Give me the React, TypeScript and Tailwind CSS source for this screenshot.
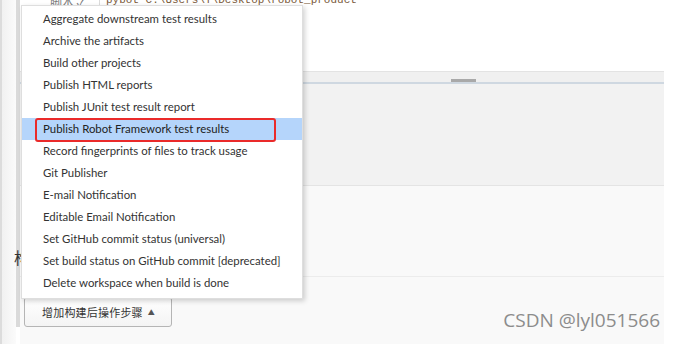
import { ReactNode } from "react";

// Jenkins "post-build action" dropdown, opened over the job config page.
const items = [
  "Aggregate downstream test results",
  "Archive the artifacts",
  "Build other projects",
  "Publish HTML reports",
  "Publish JUnit test result report",
  "Publish Robot Framework test results",
  "Record fingerprints of files to track usage",
  "Git Publisher",
  "E-mail Notification",
  "Editable Email Notification",
  "Set GitHub commit status (universal)",
  "Set build status on GitHub commit [deprecated]",
  "Delete workspace when build is done",
];

const SELECTED = 5;

function MenuItem({ label, active }: { label: string; active: boolean }): ReactNode {
  return (
    <li
      className={
        active
          ? "relative h-[22px] flex items-center pl-[21px] whitespace-nowrap bg-[#b5d5fb] text-[#222]"
          : "relative h-[22px] flex items-center pl-[21px] whitespace-nowrap text-[#333]"
      }
    >
      {label}
      {active && (
        <span className="absolute left-[13px] right-[26px] top-0 h-[24px] rounded-[3px] border-2 border-[#ea2a2a]" />
      )}
    </li>
  );
}

export default function App() {
  return (
    <div className="relative w-[676px] h-[344px] bg-white overflow-hidden flex font-['Lato',sans-serif]">
      <div className="w-[664px] h-full flex border-l-2 border-[#dcdcdc]">
        <div className="w-[14px] h-full bg-gradient-to-r from-[#f1f1f1] to-[#fbfbfb]" />
        <div className="w-[4px] h-[327px] bg-[#dadada]" />

        <div className="flex-1 flex flex-col">
          {/* script textarea */}
          <div className="h-[72px] bg-white border-b border-[#e3e3e3] flex overflow-hidden">
            <div className="w-[80px] border-r border-[#dcdcdc] flex justify-end pr-[14px] -mt-[7px] h-[86px] text-[12px] text-[#777] font-['Noto_Sans_CJK_SC',sans-serif]">
              脚本 ✓
            </div>
            <div className="pl-[6px] -mt-[8px] text-[11px] text-[#7a5a3a] font-['Liberation_Mono',monospace] whitespace-nowrap">
              pybot C:\Users\Y\Desktop\robot_product
            </div>
          </div>
          <div className="h-[12px] bg-[#f0f0f0] border-b-2 border-[#cfd8e1] flex items-end pl-[431px]">
            <div className="w-[25px] h-[3px] bg-[#a9a9a9]" />
          </div>
          <div className="h-[102px] bg-[#f2f2f2] border-b border-[#e4e4e4]" />

          {/* post-build section */}
          <div className="h-[90px] bg-[#f9f9f9] flex items-end pb-[11px]">
            <h2 className="-ml-[6px] text-[16px] text-[#333] font-['Noto_Sans_CJK_SC',sans-serif] leading-none">
              构建后操作
            </h2>
          </div>
          <div className="flex-1 bg-[#f9f9f9] border-t border-[#ececec] pt-[20px] pl-[4px]">
            <button className="w-[148px] h-[30px] rounded-[3px] border border-[#b5b5b5] bg-gradient-to-b from-white to-[#f4f4f4] flex items-center pl-[17px] gap-[5px] text-[11px] tracking-[0.2px] text-[#333] font-['Noto_Sans_CJK_SC',sans-serif]">
              增加构建后操作步骤
              <span className="text-[7px] text-[#555]">▲</span>
            </button>
          </div>
        </div>
      </div>

      {/* dropdown menu */}
      <ul className="absolute left-[21px] top-[5px] w-[282px] pt-[2px] pb-[4px] bg-white border border-[#dedede] shadow-[2px_2px_5px_rgba(0,0,0,0.18)] text-[11.4px] leading-none">
        {items.map((label, i) => (
          <MenuItem key={label} label={label} active={i === SELECTED} />
        ))}
      </ul>

      {/* watermark */}
      <span className="absolute right-[16px] top-[306px] text-[19px] text-[#8c8c8c] font-['Open_Sans',sans-serif]">
        CSDN @lyl051566
      </span>
    </div>
  );
}
